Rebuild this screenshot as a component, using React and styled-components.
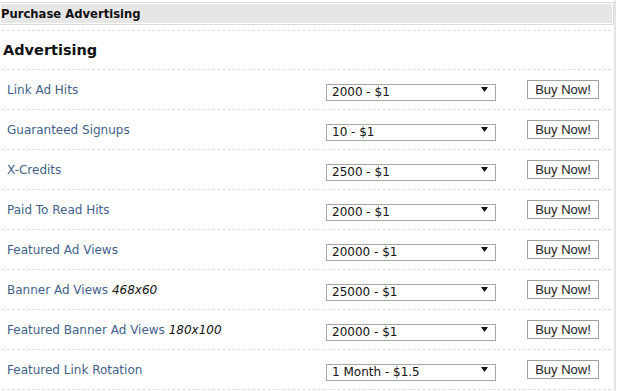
import React from "react";
import styled, { createGlobalStyle } from "styled-components";

const Global = createGlobalStyle`
  html, body { margin: 0; padding: 0; background: #fff; }
  body { font-family: "DejaVu Sans", Verdana, sans-serif; }
`;

const Panel = styled.div`
  width: 614px;
  border-right: 2px solid #e4e4e4;
  padding-top: 2px;
  min-height: 389px;
`;

const Header = styled.div`
  height: 19px;
  border: 1px solid #dcdcdc;
  border-left: none;
  padding: 1px 1px 1px 1px;
  background: #e6e6e6;
  background-clip: content-box;
  display: flex;
  align-items: center;
  font-weight: bold;
  font-size: 11.6px;
  color: #111;
`;

const List = styled.div`
  margin: 5px 3px 0 2px;
`;

const Heading = styled.h2`
  margin: 0;
  height: 38px;
  border-top: 1px dashed #dcdcdc;
  border-bottom: 1px dashed #dcdcdc;
  display: flex;
  align-items: center;
  padding-left: 1px;
  font-size: 14.5px;
  font-weight: bold;
  color: #111;
`;

const Row = styled.div`
  height: 39px;
  border-bottom: 1px dashed #dcdcdc;
  display: grid;
  grid-template-columns: 324px 201px 72px;
  align-items: center;
`;

const Label = styled.span`
  padding-left: 5px;
  font-size: 12px;
  color: #42618a;
  white-space: nowrap;
`;

const Size = styled.em`
  color: #111;
`;

const SelectWrap = styled.div`
  position: relative;
  width: 170px;
  height: 17px;
  margin-top: -1px;
`;

const Select = styled.select`
  appearance: none;
  -webkit-appearance: none;
  box-sizing: border-box;
  width: 100%;
  height: 100%;
  margin: 0;
  border: 1px solid #a6a6a6;
  border-radius: 0;
  background: #fff;
  padding: 0 0 1px 5px;
  font-family: "DejaVu Sans", Verdana, sans-serif;
  font-size: 12px;
  line-height: 14px;
  color: #111;
  outline: none;
`;

const Arrow = styled.svg`
  position: absolute;
  right: 8px;
  top: 6px;
  pointer-events: none;
`;

const Button = styled.button`
  box-sizing: border-box;
  width: 72px;
  height: 19px;
  margin: 0;
  padding: 0;
  border: 1px solid #a0a0a0;
  border-radius: 0;
  background: #fff;
  font-family: "Liberation Sans", Arial, sans-serif;
  font-size: 13px;
  color: #222;
  line-height: 17px;
`;

const rows = [
  { label: "Link Ad Hits", value: "2000 - $1" },
  { label: "Guaranteed Signups", value: "10 - $1" },
  { label: "X-Credits", value: "2500 - $1" },
  { label: "Paid To Read Hits", value: "2000 - $1" },
  { label: "Featured Ad Views", value: "20000 - $1" },
  { label: "Banner Ad Views", size: "468x60", value: "25000 - $1" },
  { label: "Featured Banner Ad Views", size: "180x100", value: "20000 - $1" },
  { label: "Featured Link Rotation", value: "1 Month - $1.5" },
];

export default function App() {
  return (
    <>
      <Global />
      <Panel>
        <Header>Purchase Advertising</Header>
        <List>
          <Heading>Advertising</Heading>
          {rows.map((r) => (
            <Row key={r.label}>
              <Label>
                {r.label}
                {r.size && (
                  <>
                    {" "}
                    <Size>{r.size}</Size>
                  </>
                )}
              </Label>
              <SelectWrap>
                <Select defaultValue={r.value}>
                  <option>{r.value}</option>
                </Select>
                <Arrow width="7" height="5" viewBox="0 0 7 5">
                  <path d="M0 0H7L3.5 5Z" fill="#111" />
                </Arrow>
              </SelectWrap>
              <Button>Buy Now!</Button>
            </Row>
          ))}
        </List>
      </Panel>
    </>
  );
}
